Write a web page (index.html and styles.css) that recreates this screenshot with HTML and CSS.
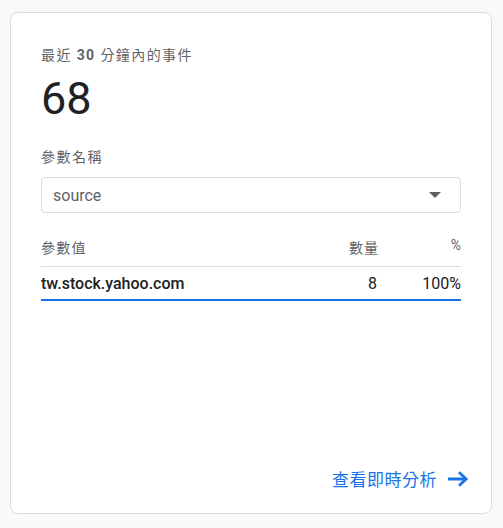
FILE: index.html
```html
<!DOCTYPE html>
<html lang="zh-Hant">
<head>
<meta charset="utf-8">
<link rel="stylesheet" href="styles.css">
</head>
<body>
<div class="card">
  <div class="title">最近 <b>30</b> 分鐘內的事件</div>
  <div class="count">68</div>
  <div class="label">參數名稱</div>
  <div class="select">
    <span>source</span>
    <svg class="caret" width="12" height="6" viewBox="0 0 12 6"><path d="M0 0h12L6 6z" fill="#5f6368"/></svg>
  </div>
  <div class="thead">
    <span class="c-name">參數值</span>
    <span class="c-num">數量</span>
    <span class="c-pct">%</span>
  </div>
  <div class="trow">
    <span class="c-name">tw.stock.yahoo.com</span>
    <span class="c-num">8</span>
    <span class="c-pct">100%</span>
  </div>
  <div class="spacer"></div>
  <div class="footer">
    <a class="link" href="#">查看即時分析
      <svg width="21" height="16" viewBox="0 0 21 16"><path d="M0 8h18M11 1.2l7.2 6.8-7.2 6.8" fill="none" stroke="#1a73e8" stroke-width="2.8"/></svg>
    </a>
  </div>
</div>
</body>
</html>
```
FILE: styles.css
```css
html, body { margin: 0; padding: 0; }
body {
  background: #f8f9fa;
  font-family: Roboto, "Noto Sans CJK TC", sans-serif;
  color: #202124;
  padding: 12px 11px 14px 10px;
  height: 528px;
  box-sizing: border-box;
}
.card {
  background: #fff;
  border: 1px solid #dadce0;
  border-radius: 8px;
  height: 100%;
  box-sizing: border-box;
  padding: 32px 30px 22px 30px;
  display: flex;
  flex-direction: column;
}
.title {
  font-size: 14px;
  color: #5f6368;
  line-height: 20px;
  letter-spacing: 1.4px;
}
.title b { font-weight: 700; }
.count {
  font-size: 45px;
  line-height: 52px;
  margin-top: 8px;
  color: #202124;
}
.label {
  margin-top: 22px;
  font-size: 14px;
  line-height: 20px;
  color: #5f6368;
  letter-spacing: 1.5px;
}
.select {
  margin-top: 10px;
  height: 36px;
  border: 1px solid #dadce0;
  border-radius: 4px;
  box-sizing: border-box;
  display: flex;
  align-items: center;
  justify-content: space-between;
  padding: 0 19px 0 11px;
  font-size: 16px;
  color: #5f6368;
}
.thead, .trow {
  display: flex;
  align-items: center;
}
.thead {
  margin-top: 24px;
  height: 29px;
  font-size: 14px;
  color: #5f6368;
  border-bottom: 1px solid #dadce0;
  align-items: flex-start;
  letter-spacing: 1.2px;
}
.trow {
  height: 32px;
  font-size: 16px;
  color: #202124;
  border-bottom: 2px solid #1a73e8;
}
.trow .c-name { font-weight: 500; }
.c-name { flex: 1; }
.c-num { width: 60px; text-align: right; }
.c-pct { width: 84px; text-align: right; }
.thead .c-num, .thead .c-pct { letter-spacing: 1px; margin-right: -1px; }
.spacer { flex: 1; }
.footer { display: flex; justify-content: flex-end; margin-right: -8px; }
.link {
  color: #1a73e8;
  text-decoration: none;
  font-size: 17px;
  display: flex;
  align-items: center;
  gap: 11px;
  letter-spacing: 0.5px;
}
```
